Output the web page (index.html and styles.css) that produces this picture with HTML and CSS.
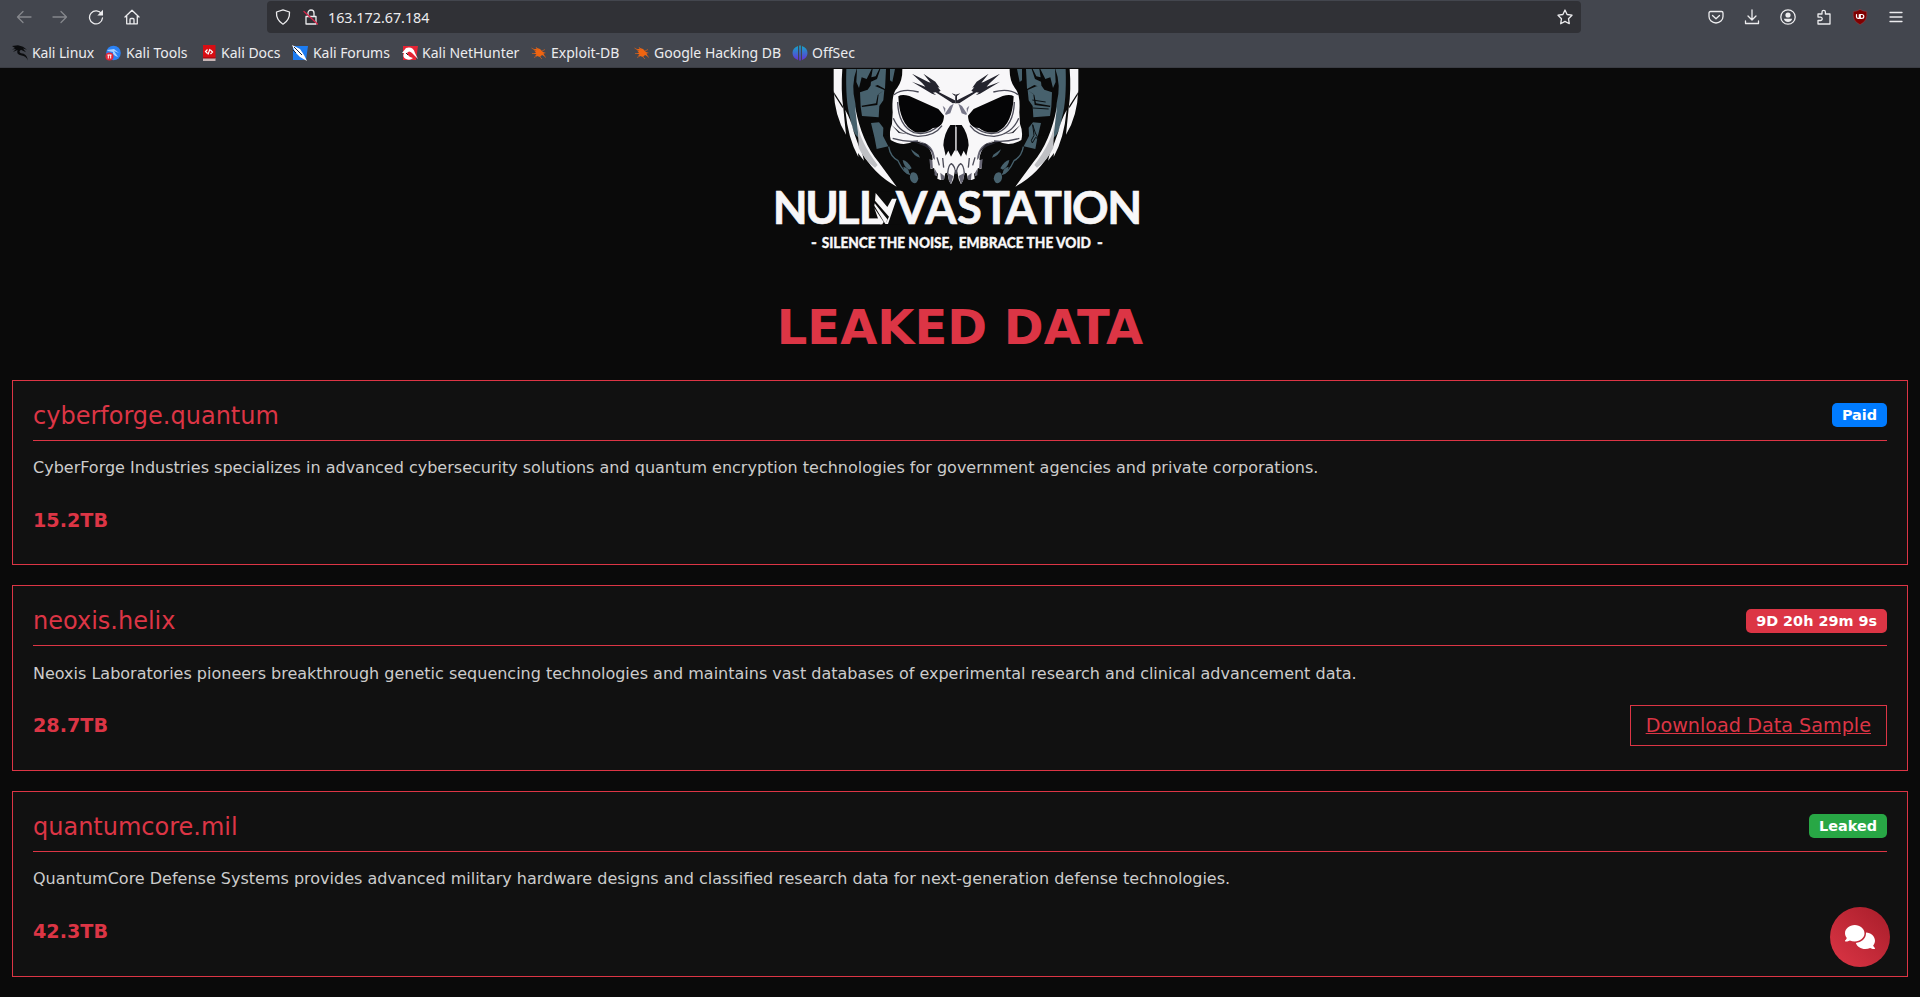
FILE: index.html
```
<!DOCTYPE html>
<html lang="en">
<head>
<meta charset="utf-8">
<title>Nullvastation</title>
<link rel="stylesheet" href="styles.css">
</head>
<body>
<header class="chrome">
  <div class="toolbar">
    <div class="nav">
      <svg class="ic dim" viewBox="0 0 16 16"><path d="M15 8H1.5M7 2.5 1.5 8 7 13.5"/></svg>
      <svg class="ic dim" viewBox="0 0 16 16"><path d="M1 8h13.500M9 2.500 14.500 8 9 13.500"/></svg>
      <svg class="ic" viewBox="0 0 16 16"><path d="M13.600 5A6.500 6.500 0 1 0 14.500 9"/><path class="solid" d="M15 .8V6.500H9.300z"/></svg>
      <svg class="ic" viewBox="0 0 16 16"><path d="M1 8 8 1.300 15 8M2.700 7v7.800h10.600V7M6 14.500v-4q0-1 1-1h2q1 0 1 1v4"/></svg>
    </div>
    <div class="url">
      <svg class="ic" viewBox="0 0 16 16"><path d="M8 .8 14.500 3Q15 11 8 15.200 1 11 1.500 3z"/></svg>
      <svg class="ic lock" viewBox="0 0 16 16"><path d="M3 7.500h10v7.500H3zM5 7.500V4a3 3 0 0 1 6 0v3.500"/><path class="slash" d="M1 2.500 14.500 15"/></svg>
      <span class="address">163.172.67.184</span>
      <svg class="ic star" viewBox="0 0 16 16"><path d="m8 1 2.100 4.500 4.900.7-3.500 3.500.8 5L8 12.400l-4.300 2.300.8-5L1 6.200l4.900-.7z"/></svg>
    </div>
    <div class="tools">
      <svg class="ic" viewBox="0 0 16 16"><path d="M2.500 2.500h11q1.500 0 1.500 1.500v3.500a7 6.500 0 0 1-14 0V4q0-1.500 1.500-1.500zM4.500 6.500 8 9.800l3.500-3.300"/></svg>
      <svg class="ic" viewBox="0 0 16 16"><path d="M8 .8v10M4 7l4 4 4-4M1.500 12v2.500h13V12"/></svg>
      <svg class="ic" viewBox="0 0 16 16"><circle cx="8" cy="8" r="7.200"/><circle class="solid" cx="8" cy="6" r="2.600"/><path class="solid" d="M3.800 9.800h8.400Q11 13 8 13T3.800 9.800z"/></svg>
      <svg class="ic" viewBox="0 0 16 16"><path d="M2 5h4V3a1.700 1.700 0 0 1 3.400 0v2H14v10H2v-3.500h2.500a1.700 1.700 0 0 0 0-3.400H2z"/></svg>
      <svg class="ic" viewBox="0 0 16 16"><path class="ublock" d="M8 .5q3 2 6.700 2Q16 12 8 15.700 0 12 1.300 2.500 5 2.500 8 .5z"/><path class="mark" d="M4.500 5.500v2.300q0 1.500 1.500 1.500h1.300V5.500M8.300 5.500h1.500q2 0 2 1.900t-2 1.900H8.300z"/></svg>
      <svg class="ic" viewBox="0 0 16 16"><path d="M2 3.500h12M2 8h12M2 12.500h12"/></svg>
    </div>
  </div>
  <nav class="bookmarks">
    <a class="bm b1"><svg viewBox="0 0 16 16"><path class="dragon" d="M0 1 6 .3l5 1.500 4 3-4-1.300 3 3.700-5-2.500Q6 6.500 9 8.300q6 .2 7 7.200-2-4.500-6.500-5Q4 9.500 5.500 5L1 7 4 4 0 4.500 3 3z"/></svg><span>Kali Linux</span></a>
    <a class="bm b2"><svg viewBox="0 0 16 16"><circle cx="8.500" cy="8" r="7.300" fill="#2b82f5"/><path d="m2 5 7-1 5 4-5-2 4 6q-6-2-5-5L3 6z" fill="#a8d1ff"/><circle cx="4.500" cy="11.500" r="4" fill="#e32636"/><path d="M3.300 13.500v-3.500M5.700 13.500v-3.500M2.500 10h4" stroke="#fff"/></svg><span>Kali Tools</span></a>
    <a class="bm b3"><svg viewBox="0 0 16 16"><path d="M2 0h12.500v13H2z" fill="#d70d13"/><path d="M2 13h12.500v3H2z" fill="#c9b7b7"/><path d="M2 13h12.500" stroke="#8d0810"/><path d="M6.500 4.500 4.500 6.500l2 2M9.500 5l2 2-2 2M9 4 7 9.500" fill="none" stroke="#fff" stroke-width="1.200"/></svg><span>Kali Docs</span></a>
    <a class="bm b4"><svg viewBox="0 0 16 16"><path d="M1 1h15l-2 14H1z" fill="#1c7cf2"/><path d="m0 0 8 4 4 6 3 6-7-4-5-5z" fill="#fff"/><path d="m2 2 8 8M1 5l3 3" stroke="#16233c"/></svg><span>Kali Forums</span></a>
    <a class="bm b5"><svg viewBox="0 0 16 16"><path d="M1 1h15l-2 14H1z" fill="#e42434"/><path d="M0 8 4 3q7-2 9 5l3 6-6-6Q7 5 5 8q1 4 6 5-3 3-7 1Q0 12 2 8z" fill="#fff"/><path d="m4 8 2 2" stroke="#222"/></svg><span>Kali NetHunter</span></a>
    <a class="bm b6"><svg viewBox="0 0 16 16"><path class="bug" d="m2 4 3 0 1-1 3 1 3 3 3 1-2.500.5 1.500 3-3-1.500-2 2-3-1-2 0 1.500-1.500-2.500-1 2-1-2-2 2.500.3z"/><path class="legs" d="M.5 3 4 5M5 2l2 3M1 8.500h3M3 12.500 6 11M9 12l2 2M12 10l3 2.500M11 6l3-1.500"/></svg><span>Exploit-DB</span></a>
    <a class="bm b7"><svg viewBox="0 0 16 16"><path class="bug" d="m2 4 3 0 1-1 3 1 3 3 3 1-2.500.5 1.500 3-3-1.500-2 2-3-1-2 0 1.500-1.500-2.500-1 2-1-2-2 2.500.3z"/><path class="legs" d="M.5 3 4 5M5 2l2 3M1 8.500h3M3 12.500 6 11M9 12l2 2M12 10l3 2.500M11 6l3-1.500"/></svg><span>Google Hacking DB</span></a>
    <a class="bm b8"><svg viewBox="0 0 16 16"><defs><linearGradient id="os" gradientUnits="userSpaceOnUse" x1="0" y1="0" x2="0" y2="16"><stop offset="0" stop-color="#10acc8"/><stop offset="1" stop-color="#6a2cd8"/></linearGradient></defs><path d="M6 1v14Q.5 13 .5 8T6 1zM7.200.5h1.600v15H7.200zM10 1q5.500 2 5.500 7T10 15z" fill="url(#os)"/></svg><span>OffSec</span></a>
  </nav>
</header>

<main class="page">
  <svg class="logo" viewBox="0 24 1200 576">
    <defs>
      <g id="half">
        <path fill="#f7f6f8" d="M221 27h26Q242 90 250 145l8 79Q224 170 221 90z"/>
        <path fill="#0a0a0a" d="m222 97 27 42-1 6-25-40z"/>
        <path fill="#47616d" d="M259 27h31Q272 75 286 130l11 105Q277 222 270 172 256 125 259 27z"/>
        <path fill="#f7f6f8" d="M256 150q17 30 25 65l16 45 3-8 12 50-18-23 1 12Q264 236 256 150z"/>
        <path fill="#f7f6f8" d="M285 140q20 105 70 165l55 75Q340 343 300 268z"/>
        <path fill="#bfc0c4" d="M294 195q6 50 59 120l-8 8q-34-25-49-60z"/>
        <path fill="#47616d" d="M291 27h44l-15 30-15-5-8 32-8-18zM338 27h20l-11 22-13 3zM361 27h17l-3 60-22-12-22 8 2-18 18-8zM390 27h15l-8 39-7-5zM300 97l23-8 10-14 12 3 28 12-3 31-12 17-2 34-50-4-4-28zM333 189l24-2 13 16-1 25 16 31-35 8-6-32z"/>
        <path fill="#0a0a0a" d="m306 141 46-6 4-33 17-12-20 15-5 25-43 7z"/>
        <path fill="none" stroke="#47616d" stroke-width="4" d="M386 260q5 30 28 42 17 37 36 41"/>
        <path fill="#47616d" d="M428 300q15 2 27 25l-8 4q-16-9-19-29zM430 320q18 4 18 22-16-2-18-22zM454 338q17-5 21 18-7 23-22 7-7-14 1-25zM453 268l23 16 4 9q-20-5-27-25z"/>
        <path fill="#f8f7f9" d="M589 27H427q1 35-16 58-17 17-13 72l-2 35q-10 24-4 48 38 22 70 3 52 6 56 56l-8 3 2 25 10-3 4 18 8-2-2 16 9 4L552 358 556 340 562 338 567 362 573 373 580 358 585 330 589 330z"/>
        <path fill="#686775" d="M470 243q54 6 55 57l-6-6q-8-42-49-51zM508 297l9 4 2 26-8-3zM523 325l8 13 0 11-7-3zM541 338l12 10 0 10-10 2zM562 338l18 10-7 25-6-11z"/>
        <path fill="none" stroke="#4a4a57" stroke-width="4" d="M402 104q28-21 74-8M400 175q20 48 74 54 50 0 72-32M413 126q2 71 49 92 42 10 76-22M398 235q42 12 76 8M563 340q2-25 11-29 11 7 14 31M531 292l7 24M548 294l3 29"/>
        <path fill="#050506" d="M415 109q10-8 33-1l87 39 17 20q-1 35-33 37-25 20-56 11-45-21-48-106z"/>
        <path fill="#777789" d="M548 137l8 8-1 16 15-23 11-7-10 29-14 5z"/>
        <path fill="#09090c" d="M588 195h-17q-19 25-21 61l7 31 8-15 8 18 11-19 4 4z"/>
        <path fill="#24242e" d="m456 41 49 25 20 6 17 20-6 4 53 27v6l-11 1-51-33-14 2-26-29zM490 41l36 24 13 18-19-5zM456 65l42 16 31 25-13-5zM395 195l25 22 26 6-30-4zM461 246l37 5 20 24-24-16zM575 100l14 4v28l-4-5v-19z"/>
      </g>
    </defs>
    <rect x="250" y="27" width="676" height="200" fill="#050505" opacity=".2"/>
    <use href="#half"/>
    <use href="#half" transform="matrix(-1 0 0 1 1176 0)"/>
    <path d="M588 200v78" stroke="#e9e7ec" stroke-width="4"/>
    <path d="m818 194 8 25 11 20-10-7-10 17-3-8 8-15zM817 120l40 6M819 144l47 3" stroke="#0b1013" stroke-width="3" fill="none"/>
    <text class="wordmark" y="493" x="38 136 228 296">NULL</text>
    <path fill="#0a0a0a" d="M340 395h66l16 98h-60v-20h-20z"/>
    <path fill="#f8f7f8" d="m347 399 35 42 14-25 14 0-26 76-8 0 11-22-42-48zM344 430l38 48-6 14-33-55zM343 444l28 42-4 7-7 0z"/>
    <text class="wordmark" y="493" x="408 496 591 668 736 824 903 936 1042">VASTATION</text>
    <g class="motto">
      <text x="153" y="563">-</text>
      <text x="185" y="563" textLength="393" lengthAdjust="spacingAndGlyphs">SILENCE THE NOISE,</text>
      <text x="596" y="563" textLength="397" lengthAdjust="spacingAndGlyphs">EMBRACE THE VOID</text>
      <text x="1011" y="563">-</text>
    </g>
  </svg>

  <h1 class="title">LEAKED DATA</h1>

  <section class="cards">
    <article class="card">
      <div class="head"><h2>cyberforge.quantum</h2><span class="badge paid">Paid</span></div>
      <p>CyberForge Industries specializes in advanced cybersecurity solutions and quantum encryption technologies for government agencies and private corporations.</p>
      <div class="foot"><strong>15.2TB</strong></div>
    </article>
    <article class="card">
      <div class="head"><h2>neoxis.helix</h2><span class="badge timer">9D 20h 29m 9s</span></div>
      <p>Neoxis Laboratories pioneers breakthrough genetic sequencing technologies and maintains vast databases of experimental research and clinical advancement data.</p>
      <div class="foot"><strong>28.7TB</strong><a class="download">Download Data Sample</a></div>
    </article>
    <article class="card">
      <div class="head"><h2>quantumcore.mil</h2><span class="badge leaked">Leaked</span></div>
      <p>QuantumCore Defense Systems provides advanced military hardware designs and classified research data for next-generation defense technologies.</p>
      <div class="foot"><strong>42.3TB</strong></div>
    </article>
  </section>
</main>

<div class="chat">
  <svg viewBox="0 0 640 512"><path fill="#fff" d="M208 352c114.900 0 208-78.800 208-176S322.900 0 208 0S0 78.800 0 176c0 38.600 14.700 74.300 39.600 103.400c-3.500 9.400-8.700 17.700-14.200 24.700c-4.800 6.200-9.700 11-13.300 14.300c-1.800 1.600-3.300 2.900-4.300 3.700c-.5 .4-.9 .7-1.100 .8l-.2 .2C1 327.200-1.400 334.400 .8 340.900S9.100 352 16 352c21.800 0 43.800-5.600 62.100-12.500c9.200-3.500 17.800-7.400 25.200-11.400C134.100 343.300 169.800 352 208 352zM448 176c0 112.300-99.100 196.900-216.500 207C255.800 457.400 336.400 512 432 512c38.200 0 73.900-8.700 104.700-23.900c7.500 4 16 7.900 25.200 11.400c18.300 6.900 40.300 12.500 62.100 12.500c6.900 0 13.100-4.500 15.200-11.100c2.100-6.600-.2-13.800-5.800-17.900l-.2-.2c-.2-.2-.6-.4-1.100-.8c-1-.8-2.500-2-4.300-3.700c-3.600-3.300-8.500-8.100-13.300-14.300c-5.500-7-10.700-15.400-14.200-24.700c24.900-29 39.600-64.700 39.600-103.400c0-92.800-84.900-168.900-192.600-175.500c.4 5.100 .6 10.300 .6 15.500z"/></svg>
</div>
</body>
</html>
```
FILE: styles.css
```
* { box-sizing: border-box; }
body { margin: 0; height: 997px; overflow: hidden; background: #0a0a0a; font-family: "DejaVu Sans", sans-serif; color: #ccc; }

.chrome { height: 68px; background: #43464e; color: #ececee; font-family: "Noto Sans", sans-serif; border-bottom: 1px solid #3a3c43; }
.toolbar { display: flex; align-items: center; height: 34px; }
.nav { display: flex; gap: 20px; width: 267px; padding-left: 16px; }
.ic { width: 16px; height: 16px; flex: none; fill: none; stroke: #ececee; stroke-width: 1.3; stroke-linejoin: round; stroke-linecap: round; }
.dim { stroke: #85878c; }
.ic .solid { fill: #ececee; stroke: none; }
.ic .slash { stroke: #d7264b; }
.ic .ublock { fill: #800000; stroke: #94444a; stroke-width: .5; }
.ic .mark { stroke: #fff; stroke-width: 1.2; }
.url { display: flex; align-items: center; width: 1314px; height: 32px; padding: 0 8px; border-radius: 4px; background: #303136; }
.lock { margin-left: 12px; }
.address { margin-left: 9px; font-size: 14.3px; }
.star { margin-left: auto; }
.tools { display: flex; gap: 20px; margin-left: 127px; }

.bookmarks { display: flex; align-items: center; height: 33px; padding: 4px 0 0 12px; font-size: 14px; line-height: 20px; }
.bm { display: flex; align-items: center; flex: none; gap: 4px; white-space: nowrap; }
.bm svg { width: 16px; height: 16px; flex: none; }
.b1 { width: 93px; letter-spacing: -.1px; }
.b2 { width: 96px; gap: 5px; }
.b3 { width: 91px; }
.b4 { width: 110px; gap: 5px; letter-spacing: -.05px; }
.b5 { width: 129px; }
.b6 { width: 103px; }
.b7 { width: 158px; }
.dragon { fill: #0b0c0e; }
.bug { fill: #ee6411; }
.legs { fill: none; stroke: #d9621d; stroke-width: .7; }

.page { display: flex; flex-direction: column; }
.logo { display: block; width: 400px; height: 192px; margin-left: 760px; }
.wordmark { font-family: Lato, sans-serif; font-weight: 700; font-size: 136px; fill: #f8f7f8; stroke: #f8f7f8; stroke-width: 2; }
.motto { font-family: Lato, sans-serif; font-weight: 900; font-size: 47px; fill: #f8f7f8; stroke: #f8f7f8; stroke-width: 1; }
.title { margin: 38px 0 23.900px; text-align: center; font-size: 48px; line-height: 58px; font-weight: 700; color: #dc3545; }

.cards { display: flex; flex-direction: column; gap: 20px; padding: 0 12px; }
.card { height: 185.550px; padding: 20px; border: 1px solid #dc3545; background: #111; }
.head { display: flex; justify-content: space-between; align-items: center; height: 39.800px; padding-bottom: 10px; border-bottom: 1px solid #dc3545; }
.head h2 { margin: 2px 0 0; font-size: 24px; font-weight: 400; line-height: 28.800px; color: #dc3545; }
.badge { padding: 4px 10px; border-radius: 5px; color: #fff; font-size: 14.4px; line-height: 16px; font-weight: 700; }
.paid { background: #007bff; }
.timer { background: #dc3545; }
.leaked { background: #28a745; }
.card p { margin: 15.400px 0 19.600px; font-size: 16px; line-height: 24px; white-space: nowrap; }
.foot { display: flex; justify-content: space-between; align-items: center; height: 41px; color: #dc3545; font-size: 19.200px; }
.download { padding: 5px 15px; border: 1px solid #dc3545; line-height: 29px; text-decoration: underline; }

.chat { position: absolute; right: 30px; bottom: 30px; display: flex; align-items: center; justify-content: center; width: 60px; height: 60px; border-radius: 50%; background: linear-gradient(45deg, #dc3545, #a71d2a); }
.chat svg { width: 30px; height: 24px; }
```
